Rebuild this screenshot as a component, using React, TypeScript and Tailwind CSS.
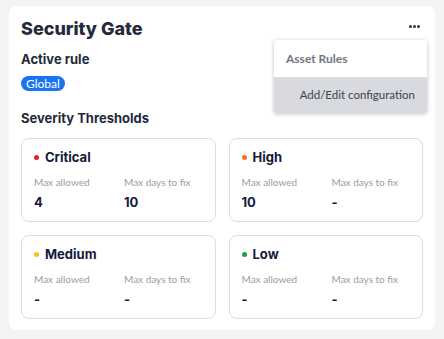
const thresholds = [
  { name: "Critical", dot: "bg-[#dc2626]", maxAllowed: "4", maxDays: "10" },
  { name: "High", dot: "bg-[#f97316]", maxAllowed: "10", maxDays: "-" },
  { name: "Medium", dot: "bg-[#fbbf24]", maxAllowed: "-", maxDays: "-" },
  { name: "Low", dot: "bg-[#16a34a]", maxAllowed: "-", maxDays: "-" },
];

const ThresholdCard = ({ item }: { item: (typeof thresholds)[number] }) => {
  return (
    <div className="border border-[#dcdce2] rounded-lg px-3 pt-[8px] h-[84px]">
      <div className="flex items-center gap-[6px]">
        <span className={`w-[5px] h-[5px] rounded-full ${item.dot}`}></span>
        <h3 className="font-bold text-[13px] leading-5 text-[#151a3a] font-[Inter,sans-serif]">
          {item.name}
        </h3>
      </div>
      <div className="grid grid-cols-[90px_1fr] mt-[9px]">
        <div>
          <p className="text-[10px] leading-3 text-[#9a9ca5]">Max allowed</p>
          <p className="mt-[6px] font-bold text-[13px] leading-4 text-[#151a3a] font-[Inter,sans-serif]">
            {item.maxAllowed}
          </p>
        </div>
        <div>
          <p className="text-[10px] leading-3 text-[#9a9ca5]">Max days to fix</p>
          <p className="mt-[6px] font-bold text-[13px] leading-4 text-[#151a3a] font-[Inter,sans-serif]">
            {item.maxDays}
          </p>
        </div>
      </div>
    </div>
  );
};

export default function App() {
  return (
    <div className="w-[444px] h-[339px] bg-[#f3f4f6] pt-[6px] px-[9px] font-[Lato,sans-serif]">
      <div className="relative bg-white rounded-lg h-[324px] px-3 pt-[9px]">
        <div className="flex justify-between items-center">
          <h1 className="text-[18px] leading-7 font-extrabold text-[#252a3a] font-[Inter,sans-serif]">
            Security Gate
          </h1>
          <button className="mr-[1px] flex gap-[1px] mb-[5px] pr-[2px]">
            <span className="w-[3px] h-[3px] bg-[#2b3447] rounded-full"></span>
            <span className="w-[3px] h-[3px] bg-[#2b3447] rounded-full"></span>
            <span className="w-[3px] h-[3px] bg-[#2b3447] rounded-full"></span>
          </button>
        </div>

        <h2 className="mt-[6px] text-[13px] leading-5 font-bold text-[#252a3a] font-[Inter,sans-serif]">
          Active rule
        </h2>
        <span className="inline-block mt-[7px] bg-[#1a73f0] text-white text-[12px] leading-[15px] px-[5px] rounded-full">
          Global
        </span>

        <h2 className="mt-[14px] text-[13px] leading-5 font-bold text-[#252a3a] font-[Inter,sans-serif]">
          Severity Thresholds
        </h2>

        <div className="grid grid-cols-2 gap-[13px] mt-[10px]">
          {thresholds.map((t) => (
            <ThresholdCard key={t.name} item={t} />
          ))}
        </div>

        <div className="absolute right-[8px] top-[34px] w-[153px] bg-white rounded-[3px] shadow-[0_1px_4px_rgba(0,0,0,0.25)] overflow-hidden">
          <div className="h-[37px] flex items-center px-[12px] text-[12px] font-bold text-[#73767e]">
            Asset Rules
          </div>
          <div className="h-[36px] flex items-center justify-end pr-[12px] bg-[#d8dadf] text-[11.5px] text-[#3d4250]">
            Add/Edit configuration
          </div>
        </div>
      </div>
    </div>
  );
}
